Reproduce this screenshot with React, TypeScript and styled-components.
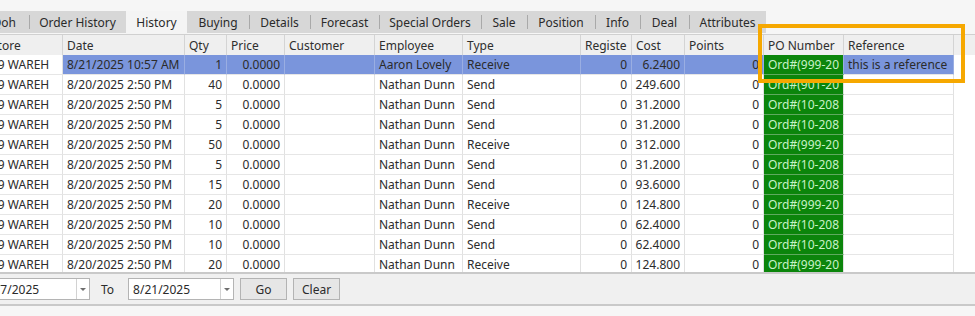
import React from 'react';
import styled, { createGlobalStyle } from 'styled-components';

const GlobalStyle = createGlobalStyle`
  html, body {
    margin: 0;
    padding: 0;
    background: #ffffff;
  }
  body {
    font-family: 'Noto Sans', 'Open Sans', sans-serif;
    font-size: 12px;
    color: #2b2b2b;
  }
`;

type Column = {
  key: string;
  label: string;
  width: number;
  align?: 'left' | 'right';
};

type Row = Record<string, string>;

const columns: Column[] = [
  { key: 'store', label: 'Store', width: 76 },
  { key: 'date', label: 'Date', width: 122 },
  { key: 'qty', label: 'Qty', width: 42, align: 'right' },
  { key: 'price', label: 'Price', width: 58, align: 'right' },
  { key: 'customer', label: 'Customer', width: 90 },
  { key: 'employee', label: 'Employee', width: 88 },
  { key: 'type', label: 'Type', width: 118 },
  { key: 'register', label: 'Registe', width: 51, align: 'right' },
  { key: 'cost', label: 'Cost', width: 53, align: 'right' },
  { key: 'points', label: 'Points', width: 79, align: 'right' },
  { key: 'po', label: 'PO Number', width: 80 },
  { key: 'reference', label: 'Reference', width: 110 },
];

const tabs = [
  { label: 'Qoh', width: 50 },
  { label: 'Order History', width: 97 },
  { label: 'History', width: 61, active: true },
  { label: 'Buying', width: 62 },
  { label: 'Details', width: 61 },
  { label: 'Forecast', width: 69 },
  { label: 'Special Orders', width: 102 },
  { label: 'Sale', width: 46 },
  { label: 'Position', width: 68 },
  { label: 'Info', width: 45 },
  { label: 'Deal', width: 49 },
  { label: 'Attributes', width: 77 },
];

const mk = (
  date: string,
  qty: string,
  employee: string,
  type: string,
  cost: string,
  po: string,
  reference = ''
): Row => ({
  store: '09 WAREH',
  date,
  qty,
  price: '0.0000',
  customer: '',
  employee,
  type,
  register: '0',
  cost,
  points: '0',
  po,
  reference,
});

const rows: Row[] = [
  mk('8/21/2025 10:57 AM', '1', 'Aaron Lovely', 'Receive', '6.2400', 'Ord#(999-20', 'this is a reference'),
  mk('8/20/2025 2:50 PM', '40', 'Nathan Dunn', 'Send', '249.600', 'Ord#(901-20'),
  mk('8/20/2025 2:50 PM', '5', 'Nathan Dunn', 'Send', '31.2000', 'Ord#(10-208'),
  mk('8/20/2025 2:50 PM', '5', 'Nathan Dunn', 'Send', '31.2000', 'Ord#(10-208'),
  mk('8/20/2025 2:50 PM', '50', 'Nathan Dunn', 'Receive', '312.000', 'Ord#(999-20'),
  mk('8/20/2025 2:50 PM', '5', 'Nathan Dunn', 'Send', '31.2000', 'Ord#(10-208'),
  mk('8/20/2025 2:50 PM', '15', 'Nathan Dunn', 'Send', '93.6000', 'Ord#(10-208'),
  mk('8/20/2025 2:50 PM', '20', 'Nathan Dunn', 'Receive', '124.800', 'Ord#(999-20'),
  mk('8/20/2025 2:50 PM', '10', 'Nathan Dunn', 'Send', '62.4000', 'Ord#(10-208'),
  mk('8/20/2025 2:50 PM', '10', 'Nathan Dunn', 'Send', '62.4000', 'Ord#(10-208'),
  mk('8/20/2025 2:50 PM', '20', 'Nathan Dunn', 'Receive', '124.800', 'Ord#(999-20'),
];

const gridTemplate = columns.map(c => `${c.width}px`).join(' ') + ' 1fr';

const Screen = styled.div`
  position: relative;
  width: 975px;
  height: 316px;
  overflow: hidden;
  display: flex;
  flex-direction: column;
  background: #f6f6f6;
`;

const TopGap = styled.div`
  height: 11px;
  flex: none;
`;

const TabStrip = styled.div`
  display: flex;
  height: 23px;
  flex: none;
  margin-left: -21px;
`;

const TabRow = styled.div`
  display: flex;
  background: #d7d7d7;
  height: 22px;
`;

const Tab = styled.div<{ $width: number; $active?: boolean; $sep?: boolean }>`
  position: relative;
  width: ${p => p.$width}px;
  display: flex;
  align-items: center;
  justify-content: center;
  background: ${p => (p.$active ? '#f4f4f4' : 'transparent')};
  height: ${p => (p.$active ? '23px' : '22px')};
  color: #2a2a2a;
  white-space: nowrap;

  &::before {
    content: '';
    display: ${p => (p.$sep ? 'block' : 'none')};
    position: absolute;
    left: 0;
    top: 4px;
    height: 14px;
    border-left: 1px solid #a9a9a9;
  }
`;

const GridArea = styled.div`
  flex: 1;
  overflow: hidden;
  background: #ffffff;
  border-top: 1px solid #d0d0d0;
`;

const Grid = styled.div`
  display: grid;
  grid-template-columns: ${gridTemplate};
  grid-auto-rows: 20px;
  margin-left: -13px;
`;

const HeaderCell = styled.div<{ $filler?: boolean }>`
  height: 21px;
  display: flex;
  align-items: center;
  padding: 0 4px;
  background: #efefef;
  border-right: ${p => (p.$filler ? 'none' : '1px solid #d4d4d4')};
  border-bottom: 1px solid #d4d4d4;
  white-space: nowrap;
  overflow: hidden;
  color: #2e2e2e;
`;

const Cell = styled.div<{ $right?: boolean; $selected?: boolean; $green?: boolean }>`
  display: flex;
  align-items: center;
  justify-content: ${p => (p.$right ? 'flex-end' : 'flex-start')};
  padding: 0 4px;
  white-space: nowrap;
  overflow: hidden;
  background: ${p => (p.$green ? '#0b850b' : p.$selected ? '#7a95dc' : '#ffffff')};
  color: ${p => (p.$green ? '#c9f1c9' : '#2b2b2b')};
  border-right: 1px solid ${p => (p.$selected ? '#9aaee2' : '#e1e1e1')};
  border-bottom: 1px solid ${p => (p.$green ? '#5fa95f' : '#e6e6e6')};
`;

const Filler = styled.div`
  background: #ffffff;
`;

const Footer = styled.div`
  flex: none;
  height: 30px;
  display: flex;
  align-items: center;
  gap: 6px;
  background: #f0f0f0;
  border-top: 2px solid #c9c9c9;
  border-bottom: 2px solid #c9c9c9;
  margin-bottom: 10px;
`;

const DateBox = styled.div<{ $offset?: number }>`
  width: 104px;
  height: 20px;
  display: flex;
  background: #ffffff;
  border: 1px solid #b4b4b4;
  margin-left: ${p => p.$offset ?? 0}px;
`;

const DateText = styled.div`
  flex: 1;
  display: flex;
  align-items: center;
  padding-left: 4px;
  color: #2b2b2b;
`;

const DropButton = styled.div`
  width: 12px;
  display: flex;
  align-items: center;
  justify-content: center;
  border-left: 1px solid #d2d2d2;
  &::after {
    content: '';
    border-left: 3px solid transparent;
    border-right: 3px solid transparent;
    border-top: 3px solid #6e6e6e;
  }
`;

const ToLabel = styled.div`
  margin: 0 8px 0 5px;
  color: #2b2b2b;
`;

const Button = styled.button`
  width: 47px;
  height: 22px;
  background: #e6e6e6;
  border: 1px solid #b3b3b3;
  border-radius: 0;
  font-family: inherit;
  font-size: 12px;
  color: #2b2b2b;
  padding: 0;
`;

const Highlight = styled.div`
  position: absolute;
  left: 758px;
  top: 24px;
  width: 199px;
  height: 51px;
  border: 4px solid #f6a800;
  pointer-events: none;
`;

export default function App() {
  return (
    <>
      <GlobalStyle />
      <Screen>
        <TopGap />
        <TabStrip>
          <TabRow>
            {tabs.map((t, i) => {
              const prev = tabs[i - 1];
              const sep = i > 0 && !t.active && !(prev && prev.active);
              return (
                <Tab key={t.label} $width={t.width} $active={t.active} $sep={sep}>
                  {t.label}
                </Tab>
              );
            })}
          </TabRow>
        </TabStrip>
        <GridArea>
          <Grid>
            {columns.map(c => (
              <HeaderCell key={c.key}>{c.label}</HeaderCell>
            ))}
            <HeaderCell $filler />
            {rows.map((r, ri) => (
              <React.Fragment key={ri}>
                {columns.map(c => (
                  <Cell
                    key={c.key}
                    $right={c.align === 'right'}
                    $selected={ri === 0 && c.key !== 'store'}
                    $green={c.key === 'po'}
                  >
                    {r[c.key]}
                  </Cell>
                ))}
                <Filler />
              </React.Fragment>
            ))}
          </Grid>
        </GridArea>
        <Footer>
          <DateBox $offset={-16}>
            <DateText>8/7/2025</DateText>
            <DropButton />
          </DateBox>
          <ToLabel>To</ToLabel>
          <DateBox>
            <DateText>8/21/2025</DateText>
            <DropButton />
          </DateBox>
          <Button>Go</Button>
          <Button>Clear</Button>
        </Footer>
        <Highlight />
      </Screen>
    </>
  );
}
